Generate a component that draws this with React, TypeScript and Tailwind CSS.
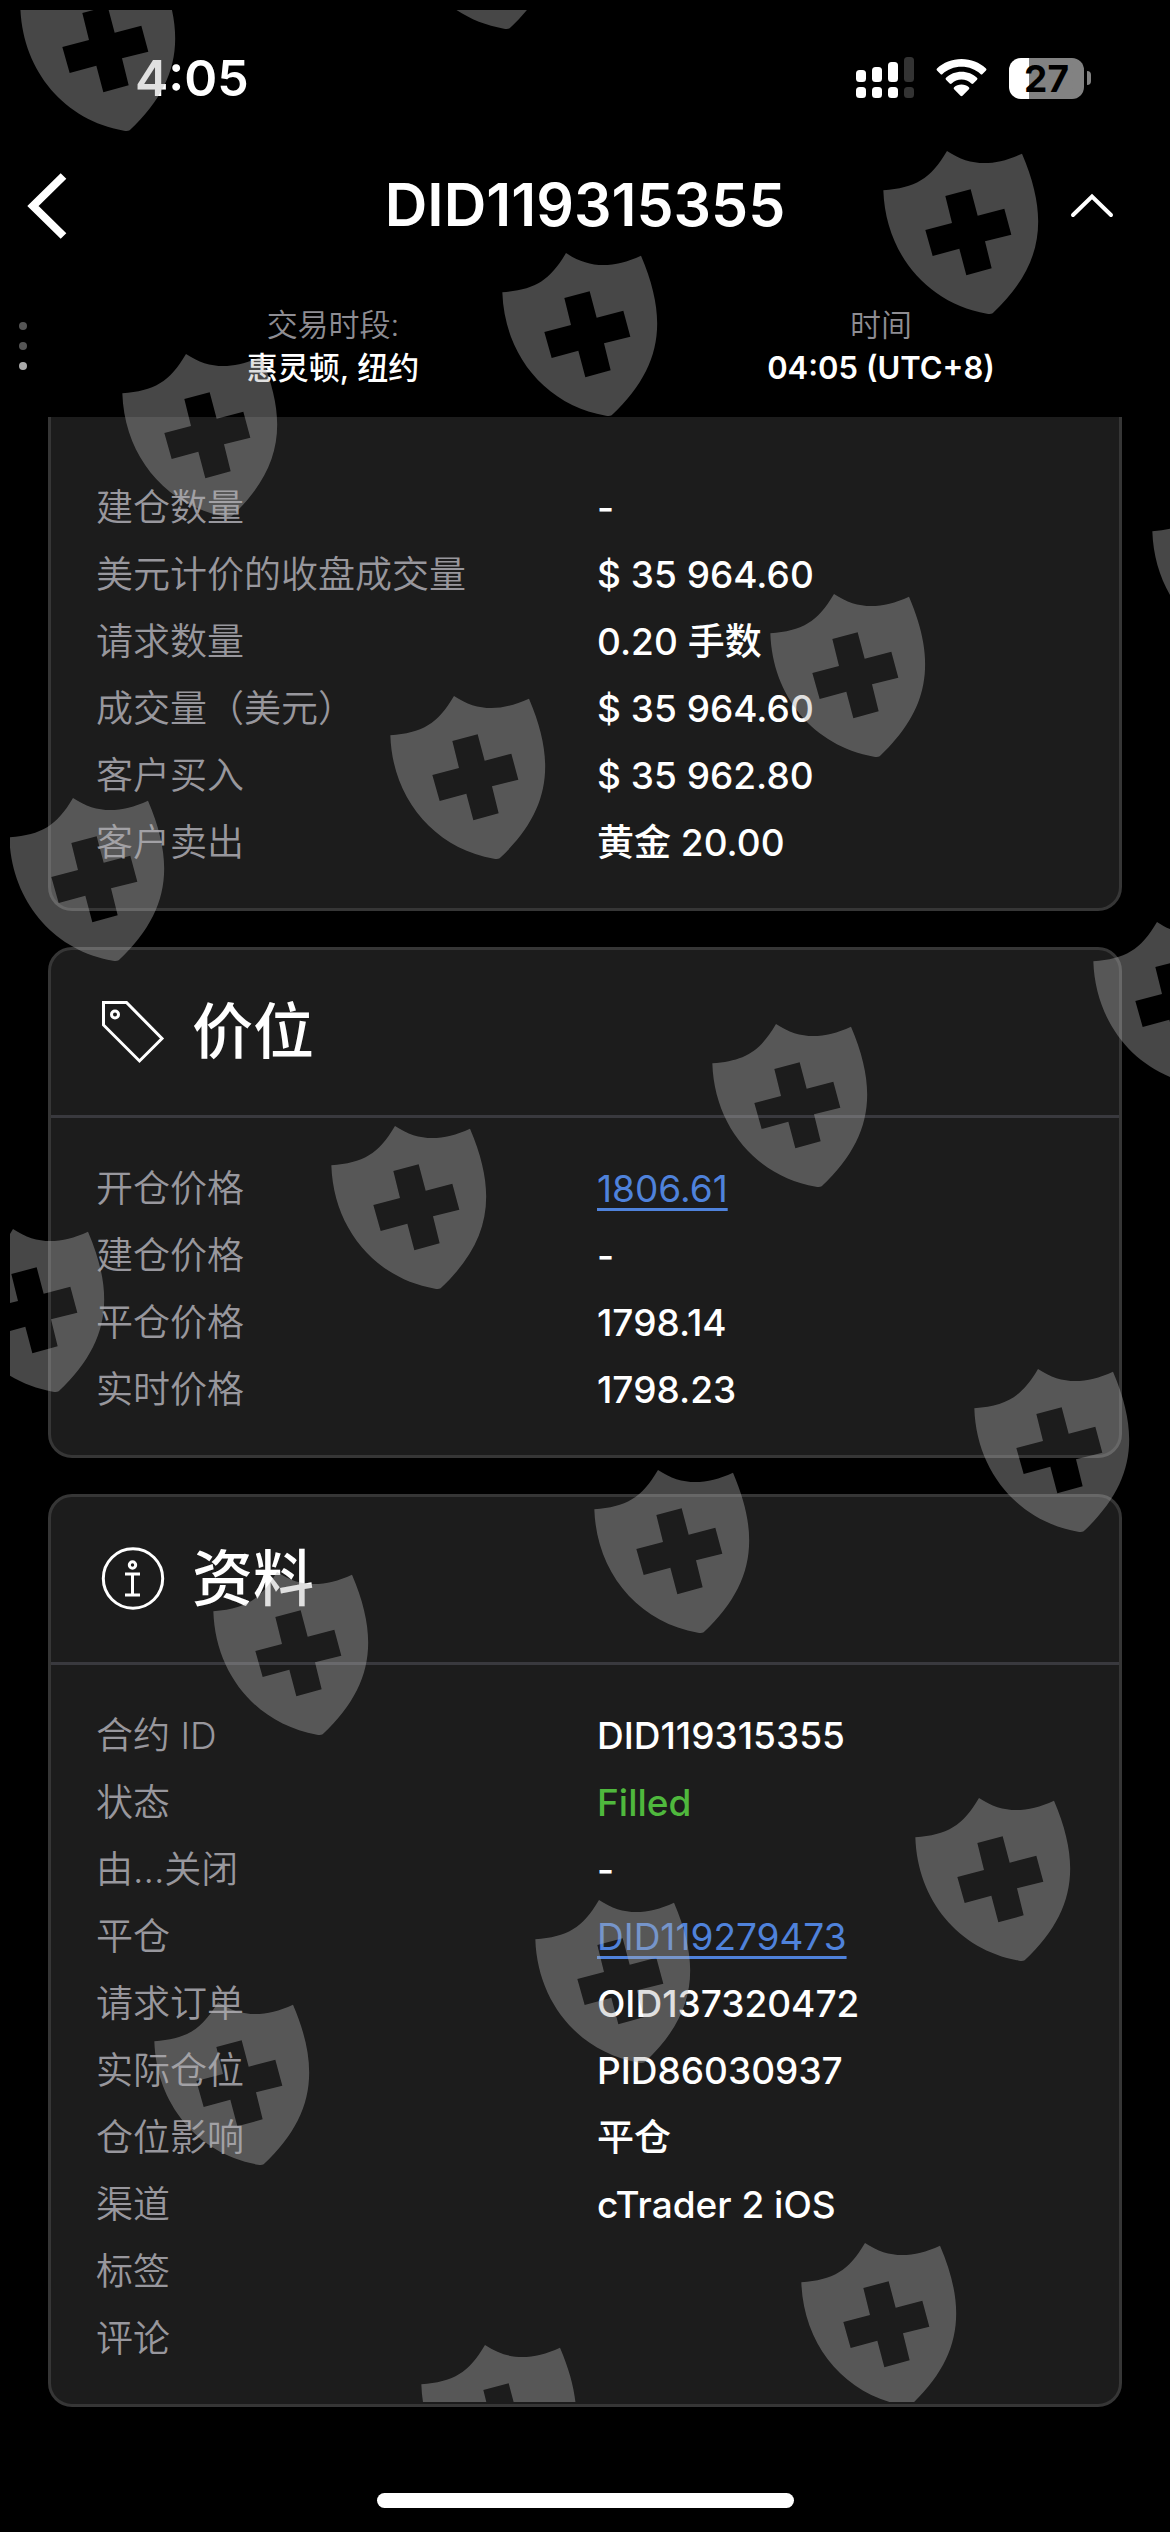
import React from 'react';

interface Field {
  label: string;
  value?: string;
  kind?: 'link' | 'filled';
}

const volumeFields: Field[] = [
  { label: '建仓数量', value: '-' },
  { label: '美元计价的收盘成交量', value: '$ 35 964.60' },
  { label: '请求数量', value: '0.20 手数' },
  { label: '成交量（美元）', value: '$ 35 964.60' },
  { label: '客户买入', value: '$ 35 962.80' },
  { label: '客户卖出', value: '黄金 20.00' },
];

const priceFields: Field[] = [
  { label: '开仓价格', value: '1806.61', kind: 'link' },
  { label: '建仓价格', value: '-' },
  { label: '平仓价格', value: '1798.14' },
  { label: '实时价格', value: '1798.23' },
];

const infoFields: Field[] = [
  { label: '合约 ID', value: 'DID119315355' },
  { label: '状态', value: 'Filled', kind: 'filled' },
  { label: '由...关闭', value: '-' },
  { label: '平仓', value: 'DID119279473', kind: 'link' },
  { label: '请求订单', value: 'OID137320472' },
  { label: '实际仓位', value: 'PID86030937' },
  { label: '仓位影响', value: '平仓' },
  { label: '渠道', value: 'cTrader 2 iOS' },
  { label: '标签' },
  { label: '评论' },
];

// Top-left horn of every shield in the watermark layer
const shields = [
  [74, -42], [454, -144], [937, 141], [556, 243], [176, 344],
  [1206, 482], [824, 584], [444, 686], [63, 788],
  [1147, 912], [766, 1014], [385, 1116], [3, 1219],
  [1028, 1359], [648, 1460], [267, 1562],
  [969, 1788], [589, 1890], [208, 1992],
  [855, 2233], [475, 2335],
];

const Watermark: React.FC = () => (
  <svg className="pointer-events-none absolute left-[10px] top-[10px] h-[2392px] w-full" aria-hidden="true">
    <defs>
      <g id="shield">
        <path
          fillRule="evenodd"
          transform="scale(0.33333) translate(-260 -63)"
          d="M69 181C165 173 210 148 260 63C330 110 400 110 485 71C570 270 545 410 397 550Q390 553 380 551C200 520 75 370 69 181ZM255 198L275 279L195 300L217 378L297 356L318 436L394 415L374 334L453 314L432 236L352 257L331 178Z"
        />
      </g>
    </defs>
    <g fill="#b2b2b2" fillOpacity="0.4">
      {shields.map(([x, y]) => (
        <use key={`${x}-${y}`} href="#shield" x={x} y={y} />
      ))}
    </g>
  </svg>
);

const StatusBar: React.FC = () => (
  <div className="flex h-[156px] items-center justify-between pl-[135px] pr-[79px]">
    <span className="text-[50px] font-semibold leading-none">4:05</span>
    <div className="flex items-center">
      <svg width="58" height="42" viewBox="0 0 58 42" fill="#fff">
        <rect x="0" y="13" width="10" height="12" rx="3.5" />
        <rect x="16" y="10" width="10" height="15" rx="3.5" />
        <rect x="32" y="5" width="10" height="20" rx="3.5" />
        <rect x="48" y="0" width="10" height="25" rx="3.5" fill="#333" />
        <rect x="0" y="30" width="10" height="11" rx="3.5" />
        <rect x="16" y="30" width="10" height="11" rx="3.5" />
        <rect x="32" y="30" width="10" height="11" rx="3.5" />
        <rect x="48" y="30" width="10" height="11" rx="3.5" fill="#333" />
      </svg>
      <svg className="ml-[22px]" width="51" height="42" viewBox="0 0 51 42" fill="#fff">
        <path d="M25.500 2C35 2 43.500 5.500 50 11.500Q51 12.500 50 13.500L46.500 17Q45.500 18 44.500 17C39.500 12.500 33 9.800 25.500 9.800S11.500 12.500 6.500 17Q5.500 18 4.500 17L1 13.500Q0 12.500 1 11.500C7.500 5.500 16 2 25.500 2Z" />
        <path d="M25.500 14.800C31.500 14.800 37 17 41 20.800Q42 21.800 41 22.800L37.300 26.500Q36.300 27.300 35.300 26.500C32.700 24 29.300 22.600 25.500 22.600S18.300 24 15.700 26.500Q14.700 27.300 13.700 26.500L10 22.800Q9 21.800 10 20.800C14 17 19.500 14.800 25.500 14.800Z" />
        <path d="M25.500 27.600C28.300 27.600 31 28.600 32.900 30.300Q33.900 31.300 32.900 32.300L26.500 38.800Q25.500 39.600 24.500 38.800L18.100 32.300Q17.100 31.300 18.100 30.300C20 28.600 22.700 27.600 25.500 27.600Z" />
      </svg>
      <div className="ml-[22px] flex h-[41px] w-[75px] items-center justify-center rounded-[12px] bg-linear-to-r from-white from-27% to-[#828282] to-27%">
        <span className="text-[37px] font-bold leading-none text-black">27</span>
      </div>
      <div className="ml-[3px] h-[14px] w-[4px] rounded-r-full bg-[#828282]" />
    </div>
  </div>
);

const Header: React.FC = () => (
  <header className="flex h-[100px] items-center justify-between px-6">
    <button type="button" aria-label="返回" className="flex w-[78px] justify-start">
      <svg width="48" height="72" viewBox="0 0 48 72" fill="none" stroke="#fff" strokeWidth="8">
        <path d="M39.500 6L9 36L39.500 66" strokeLinejoin="miter" />
      </svg>
    </button>
    <h1 className="pb-1 text-[59px] font-semibold leading-none">DID119315355</h1>
    <button type="button" aria-label="收起" className="flex w-[78px] justify-start">
      <svg width="48" height="48" viewBox="0 0 48 48" fill="none" stroke="#fff" strokeWidth="4">
        <path d="M5 33L24 14.500L43 33" strokeLinecap="round" />
      </svg>
    </button>
  </header>
);

const SessionBar: React.FC = () => (
  <div className="flex items-center px-[15px] pb-7 pt-[47px] text-center text-[31px] leading-[43px]">
    <div className="flex w-[44px] flex-col gap-3 pl-1">
      <span className="h-2 w-2 rounded-full bg-[#555]" />
      <span className="h-2 w-2 rounded-full bg-[#555]" />
      <span className="h-2 w-2 rounded-full bg-[#aaa]" />
    </div>
    <div className="flex-1">
      <p className="font-[350] text-[#8e8d93]">交易时段:</p>
      <p className="font-medium">惠灵顿, 纽约</p>
    </div>
    <div className="flex-1">
      <p className="font-[350] text-[#8e8d93]">时间</p>
      <p className="font-semibold">04:05 (UTC+8)</p>
    </div>
  </div>
);

const FieldValue: React.FC<{ field: Field }> = ({ field }) => {
  if (field.kind === 'link') {
    return (
      <a href={`#${field.value}`} className="text-[#4f82db] underline decoration-3 underline-offset-[6px]">
        {field.value}
      </a>
    );
  }
  if (field.kind === 'filled') {
    return <span className="font-medium text-[#4fb83d]">{field.value}</span>;
  }
  return <span className="font-medium">{field.value}</span>;
};

const FieldList: React.FC<{ fields: Field[] }> = ({ fields }) => (
  <dl className="px-[45px] pb-8 pt-[37px] text-[37px] leading-[67px]">
    {fields.map((field) => (
      <div key={field.label} className="grid grid-cols-2 gap-6">
        <dt className="font-[350] text-[#98979d]">{field.label}</dt>
        <dd>
          <FieldValue field={field} />
        </dd>
      </div>
    ))}
  </dl>
);

interface CardProps {
  title: string;
  icon: React.ReactNode;
  fields: Field[];
}

const Card: React.FC<CardProps> = ({ title, icon, fields }) => (
  <section className="rounded-3xl border-3 border-[#363636] bg-[#1c1c1c]">
    <div className="flex h-[168px] items-center gap-6 border-b-3 border-[#39393e] px-[45px]">
      {icon}
      <h2 className="text-[61px] font-medium leading-none">{title}</h2>
    </div>
    <FieldList fields={fields} />
  </section>
);

const TagIcon = () => (
  <svg width="72" height="72" viewBox="0 0 72 72" fill="none" stroke="#fff" strokeWidth="3">
    <path d="M7.500 5.500H30.500L66 41.500L43.500 64L7.500 28Z" />
    <circle cx="19" cy="17.500" r="3.500" />
  </svg>
);

const InfoIcon = () => (
  <svg width="72" height="72" viewBox="0 0 72 72" fill="none" stroke="#fff" strokeWidth="3">
    <circle cx="37" cy="34.500" r="29.700" />
    <circle cx="36.500" cy="21" r="3.200" />
    <path d="M29 30H44M36.500 30V51M29 51H44" />
  </svg>
);

const App: React.FC = () => {
  return (
    <div className="relative min-h-screen overflow-hidden bg-black font-['Inter','Noto_Sans_CJK_SC',sans-serif] text-white">
      <StatusBar />
      <Header />
      <SessionBar />

      <main className="flex flex-col gap-9 px-12">
        {/* Volume card, scrolled partly under the header */}
        <section className="rounded-b-3xl border-x-3 border-b-3 border-[#363636] bg-[#1c1c1c] pt-5">
          <FieldList fields={volumeFields} />
        </section>
        <Card title="价位" icon={<TagIcon />} fields={priceFields} />
        <Card title="资料" icon={<InfoIcon />} fields={infoFields} />
      </main>

      {/* Home indicator */}
      <div className="flex justify-center pb-6 pt-[86px]">
        <div className="h-[15px] w-[417px] rounded-full bg-white" />
      </div>

      <Watermark />
    </div>
  );
};

export default App;
